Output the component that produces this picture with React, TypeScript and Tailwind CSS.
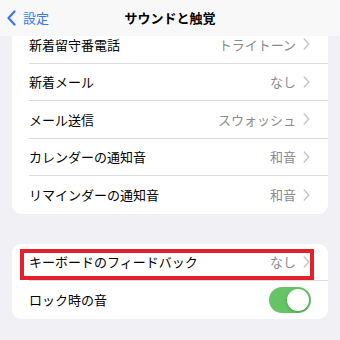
import React from "react";

const font = { fontFamily: '"Noto Sans CJK JP", "Noto Sans", sans-serif' };

function Chevron() {
  return (
    <svg width="7" height="12" viewBox="0 0 7 12" className="ml-[7px] shrink-0">
      <polyline points="1.2,1 5.8,6 1.2,11" fill="none" stroke="#c4c4c7" strokeWidth="1.4" strokeLinecap="round" strokeLinejoin="round" />
    </svg>
  );
}

function Row({ label, value, last }: { label: string; value?: string; last?: boolean }) {
  return (
    <div className="h-[37.5px] pl-[17px]">
      <div className={`flex h-full items-center pr-[18px] ${last ? "" : "border-b border-[#dcdce0]"}`}>
        <span className="flex-1 text-[13px] text-black">{label}</span>
        {value && <span className="text-[13px] text-[#8a8a8e]">{value}</span>}
        <Chevron />
      </div>
    </div>
  );
}

export default function App() {
  return (
    <div className="relative h-[340px] w-[340px] overflow-hidden bg-[#f0f0f5]" style={font}>
      {/* nav bar overlays the scrolled list */}
      <div className="absolute inset-x-0 top-0 z-10 flex h-[36px] items-center bg-[#f8f8f8]">
        <div className="flex items-center pl-[7px]">
          <svg width="9" height="16" viewBox="0 0 9 16">
            <polyline points="7.5,1.5 1.5,8 7.5,14.5" fill="none" stroke="#3478f6" strokeWidth="2.2" strokeLinecap="round" strokeLinejoin="round" />
          </svg>
          <span className="ml-[7px] text-[13px] text-[#3478f6]">設定</span>
        </div>
        <div className="absolute inset-x-0 text-center text-[13px] font-bold text-black pointer-events-none">サウンドと触覚</div>
      </div>

      <div className="px-[12px] pt-[26px]">
        <div className="rounded-[9px] bg-white">
          <Row label="新着留守番電話" value="トライトーン" />
          <Row label="新着メール" value="なし" />
          <Row label="メール送信" value="スウォッシュ" />
          <Row label="カレンダーの通知音" value="和音" />
          <Row label="リマインダーの通知音" value="和音" last />
        </div>

        <div className="mt-[30px] rounded-[9px] bg-white">
          <div className="relative">
            <Row label="キーボードのフィードバック" value="なし" />
            <div className="absolute left-[8px] top-[5px] h-[31px] w-[294px] border-[4px] border-[#e3202c]" />
          </div>
          <div className="h-[37.5px] pl-[17px]">
            <div className="flex h-full items-center pr-[17px]">
              <span className="flex-1 text-[13px] text-black">ロック時の音</span>
              <div className="flex h-[26px] w-[42px] items-center justify-end rounded-full bg-[#65c466] p-[2px]">
                <div className="h-[22px] w-[22px] rounded-full bg-white shadow-[0_1px_3px_rgba(0,0,0,0.25)]" />
              </div>
            </div>
          </div>
        </div>
      </div>
    </div>
  );
}
